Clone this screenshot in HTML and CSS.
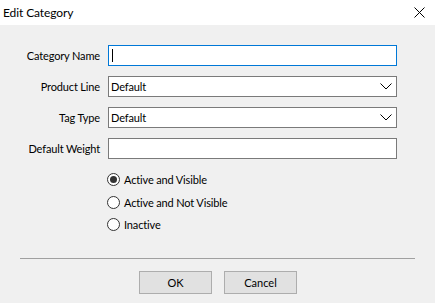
FILE: index.html
```html
<!DOCTYPE html>
<html>
<head>
    <title>Edit Category</title>
    <link rel="stylesheet" href="styles.css">
</head>
<body>
    <!-- Title Bar -->
    <header class="title-bar">
        <span class="title-text">Edit Category</span>
        <span class="close-btn">
            <svg width="11" height="11" viewBox="0 0 11 11">
                <path d="M0.5 0.5 L10.5 10.5 M10.5 0.5 L0.5 10.5" stroke="#000" stroke-width="1" fill="none"/>
            </svg>
        </span>
    </header>

    <!-- Form -->
    <div class="dialog-body">
        <div class="form-grid">
            <label class="form-label">Category Name</label>
            <div class="field focused"><span class="caret"></span></div>

            <label class="form-label">Product Line</label>
            <div class="field select">
                <span>Default</span>
                <svg class="chevron" width="12" height="7" viewBox="0 0 12 7">
                    <path d="M0.5 0.5 L6 6 L11.5 0.5" stroke="#000" stroke-width="1" fill="none"/>
                </svg>
            </div>

            <label class="form-label">Tag Type</label>
            <div class="field select">
                <span>Default</span>
                <svg class="chevron" width="12" height="7" viewBox="0 0 12 7">
                    <path d="M0.5 0.5 L6 6 L11.5 0.5" stroke="#000" stroke-width="1" fill="none"/>
                </svg>
            </div>

            <label class="form-label">Default Weight</label>
            <div class="field"></div>
        </div>

        <div class="radio-group">
            <div class="radio-row"><span class="radio checked"></span>Active and Visible</div>
            <div class="radio-row"><span class="radio"></span>Active and Not Visible</div>
            <div class="radio-row"><span class="radio"></span>Inactive</div>
        </div>

        <div class="separator"></div>

        <div class="button-row">
            <button class="dlg-btn">OK</button>
            <button class="dlg-btn">Cancel</button>
        </div>
    </div>
</body>
</html>
```

FILE: styles.css
```css
* {
    margin: 0;
    padding: 0;
    box-sizing: border-box;
    font-family: 'Segoe UI', Lato, 'Liberation Sans', sans-serif;
}

body {
    background: #f0f0f0;
    width: 435px;
    height: 303px;
    overflow: hidden;
    color: #000;
    font-size: 11px;
    letter-spacing: -0.15px;
}

/* Title Bar */
.title-bar {
    height: 25px;
    background: #fff;
    display: flex;
    justify-content: space-between;
    align-items: center;
    padding: 0 10px 0 3px;
}

.title-text {
    font-size: 12px;
    letter-spacing: -0.1px;
}

.close-btn {
    display: flex;
    align-items: center;
}

/* Form */
.dialog-body {
    padding-top: 20px;
}

.form-grid {
    display: grid;
    grid-template-columns: 100px 289px;
    column-gap: 8px;
    row-gap: 10px;
    align-items: center;
}

.form-label {
    text-align: right;
}

.field {
    height: 21px;
    background: #fff;
    border: 1px solid #7a7a7a;
    display: flex;
    align-items: center;
    justify-content: space-between;
    padding: 0 4px 0 2px;
}

.field.focused {
    border-color: #0078d7;
}

.caret {
    width: 1px;
    height: 13px;
    background: #000;
    margin-left: 1px;
}

/* Radios */
.radio-group {
    margin: 14px 0 0 107px;
    display: flex;
    flex-direction: column;
    gap: 9px;
}

.radio-row {
    display: flex;
    align-items: center;
    gap: 4px;
    height: 13.5px;
}

.radio {
    width: 13px;
    height: 13px;
    border: 1px solid #333;
    border-radius: 50%;
    background: #fff;
    display: flex;
    justify-content: center;
    align-items: center;
}

.radio.checked::after {
    content: '';
    width: 7px;
    height: 7px;
    border-radius: 50%;
    background: #333;
}

.separator {
    margin: 26px 20px 0 20px;
    height: 1px;
    background: #a0a0a0;
}

.button-row {
    display: flex;
    justify-content: center;
    gap: 12px;
    margin-top: 12px;
    padding-left: 1px;
}

.dlg-btn {
    width: 73px;
    height: 23px;
    background: #e1e1e1;
    border: 1px solid #adadad;
    font-size: 11px;
    color: #000;
}
```
